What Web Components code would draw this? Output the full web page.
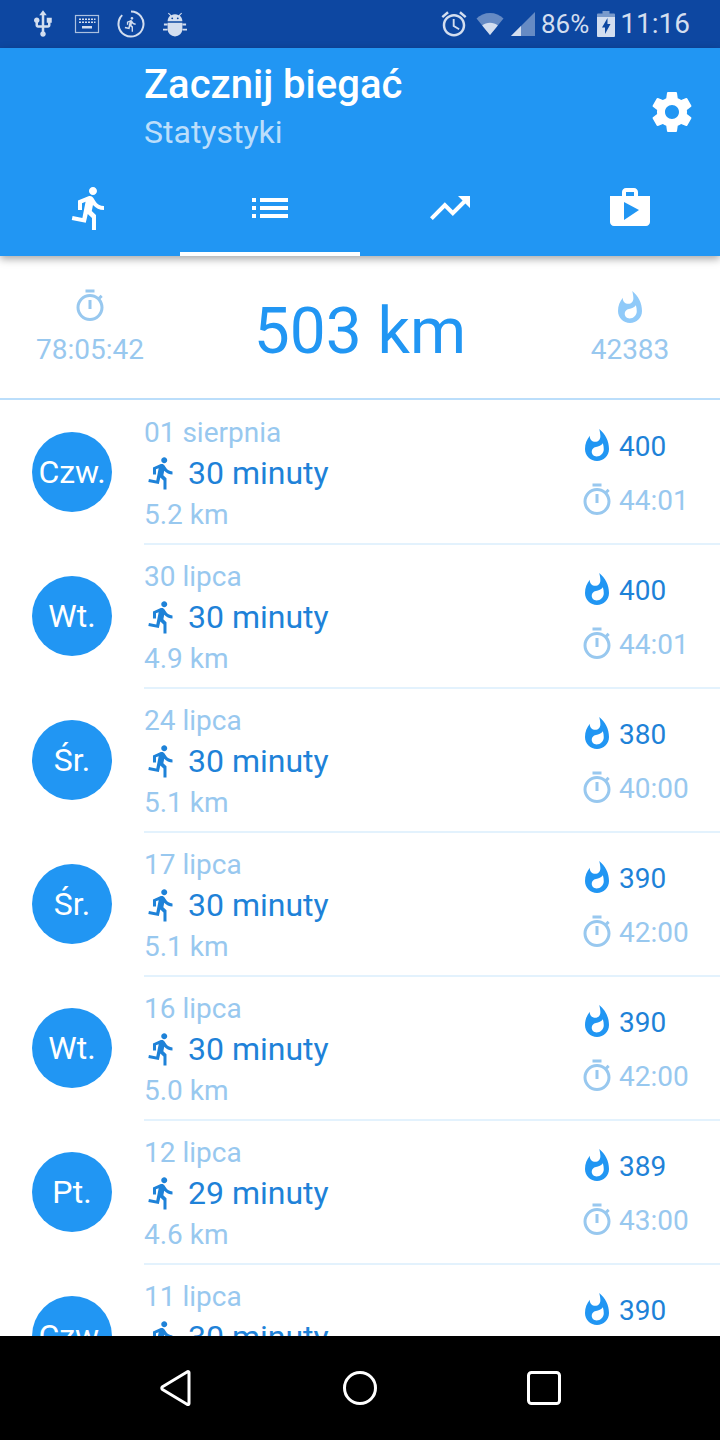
<!DOCTYPE html>
<html lang="pl">
<head>
<meta charset="utf-8">
<title>Zacznij biegać</title>
<style>
  html, body { margin: 0; padding: 0; background: #fff; }
  body { font-family: Roboto, "Noto Sans", sans-serif; }
  run-screen { height: 1440px; }
</style>
</head>
<body>
<run-screen>
  <status-bar slot="status"></status-bar>
  <app-bar slot="top" title="Zacznij biegać" subtitle="Statystyki">
    <app-tab icon="run"></app-tab>
    <app-tab icon="list" selected></app-tab>
    <app-tab icon="trend"></app-tab>
    <app-tab icon="shop"></app-tab>
  </app-bar>
  <run-summary slot="top" time="78:05:42" distance="503 km" calories="42383"></run-summary>
  <run-row day="Czw." date="01 sierpnia" duration="30 minuty" distance="5.2 km" calories="400" time="44:01"></run-row>
  <run-row day="Wt." date="30 lipca" duration="30 minuty" distance="4.9 km" calories="400" time="44:01"></run-row>
  <run-row day="Śr." date="24 lipca" duration="30 minuty" distance="5.1 km" calories="380" time="40:00"></run-row>
  <run-row day="Śr." date="17 lipca" duration="30 minuty" distance="5.1 km" calories="390" time="42:00"></run-row>
  <run-row day="Wt." date="16 lipca" duration="30 minuty" distance="5.0 km" calories="390" time="42:00"></run-row>
  <run-row day="Pt." date="12 lipca" duration="29 minuty" distance="4.6 km" calories="389" time="43:00"></run-row>
  <run-row day="Czw." date="11 lipca" duration="30 minuty" distance="4.8 km" calories="390" time="42:00"></run-row>
  <nav-bar slot="nav"></nav-bar>
</run-screen>

<script>
const icons = {
	run: "M13.49 5.48c1.1 0 2-.9 2-2s-.9-2-2-2-2 .9-2 2 .9 2 2 2zm-3.6 13.9l1-4.4 2.1 2v6h2v-7.5l-2.1-2 .6-3c1.3 1.5 3.3 2.5 5.5 2.5v-2c-1.9 0-3.5-1-4.3-2.4l-1-1.6c-.4-.6-1-1-1.7-1-.3 0-.5.1-.8.1l-5.2 2.2v4.7h2v-3.4l1.8-.7-1.6 8.1-4.9-1-.4 2 7 1.4z",
	list: "M3 13h2v-2H3v2zm0 4h2v-2H3v2zm0-8h2V7H3v2zm4 4h14v-2H7v2zm0 4h14v-2H7v2zM7 7v2h14V7H7z",
	trend: "M16 6l2.29 2.29-4.88 4.88-4-4L2 16.59 3.41 18l6-6 4 4 6.3-6.29L22 12V6z",
	shop: "M16 6V4c0-1.11-.89-2-2-2h-4c-1.11 0-2 .89-2 2v2H2v13c0 1.11.89 2 2 2h16c1.11 0 2-.89 2-2V6h-6zm-6-2h4v2h-4V4zM9 18V9l7.5 4L9 18z",
	settings: "M19.43 12.98c.04-.32.07-.64.07-.98s-.03-.66-.07-.98l2.11-1.65c.19-.15.24-.42.12-.64l-2-3.46c-.12-.22-.39-.3-.61-.22l-2.49 1c-.52-.4-1.08-.73-1.69-.98l-.38-2.65C14.46 2.18 14.25 2 14 2h-4c-.25 0-.46.18-.49.42l-.38 2.65c-.61.25-1.17.59-1.69.98l-2.49-1c-.23-.09-.49 0-.61.22l-2 3.46c-.13.22-.07.49.12.64l2.11 1.65c-.04.32-.07.65-.07.98s.03.66.07.98l-2.11 1.65c-.19.15-.24.42-.12.64l2 3.46c.12.22.39.3.61.22l2.49-1c.52.4 1.08.73 1.69.98l.38 2.65c.03.24.24.42.49.42h4c.25 0 .46-.18.49-.42l.38-2.65c.61-.25 1.17-.59 1.69-.98l2.49 1c.23.09.49 0 .61-.22l2-3.46c.12-.22.07-.49-.12-.64l-2.11-1.65zM12 15.5c-1.93 0-3.5-1.57-3.5-3.5s1.57-3.5 3.5-3.5 3.5 1.57 3.5 3.5-1.57 3.5-3.5 3.5z",
	timer: "M15 1H9v2h6V1zm-4 13h2V8h-2v6zm8.03-6.61l1.42-1.42c-.43-.51-.9-.99-1.41-1.41l-1.42 1.42C16.07 4.74 14.12 4 12 4c-4.97 0-9 4.03-9 9s4.02 9 9 9 9-4.03 9-9c0-2.12-.74-4.07-1.97-5.61zM12 20c-3.87 0-7-3.13-7-7s3.13-7 7-7 7 3.13 7 7-3.13 7-7 7z",
	flame: "M13.5.67s.74 2.65.74 4.8c0 2.06-1.35 3.73-3.41 3.73-2.07 0-3.63-1.67-3.63-3.73l.03-.36C5.21 7.51 4 10.62 4 14c0 4.42 3.58 8 8 8s8-3.58 8-8C20 8.61 17.41 3.8 13.5.67zM11.71 19c-1.78 0-3.22-1.4-3.22-3.14 0-1.62 1.05-2.76 2.81-3.12 1.77-.36 3.6-1.21 4.62-2.58.39 1.29.59 2.65.59 4.04 0 2.65-2.15 4.8-4.8 4.8z",
	usb: "M15 7v4h1v2h-3V5h2l-3-4-3 4h2v8H8v-2.07c.7-.37 1.2-1.08 1.2-1.93 0-1.21-.99-2.2-2.2-2.2-1.21 0-2.2.99-2.2 2.2 0 .85.5 1.56 1.2 1.93V13c0 1.11.89 2 2 2h3v3.05c-.71.37-1.2 1.1-1.2 1.95 0 1.22.99 2.2 2.2 2.2 1.21 0 2.2-.98 2.2-2.2 0-.85-.49-1.58-1.2-1.95V15h3c1.11 0 2-.89 2-2v-2h1V7h-4z",
	alarm: "M22 5.72l-4.6-3.86-1.29 1.53 4.6 3.86L22 5.72zM7.88 3.39L6.6 1.86 2 5.71l1.29 1.53 4.59-3.85zM12.5 8H11v6l4.75 2.85.75-1.23-4-2.37V8zM12 4c-4.97 0-9 4.03-9 9s4.03 9 9 9c4.97 0 9-4.03 9-9s-4.03-9-9-9zm0 16c-3.87 0-7-3.13-7-7s3.13-7 7-7 7 3.13 7 7-3.13 7-7 7z",
};

class MdIcon extends HTMLElement {
	connectedCallback() {
		const size = this.getAttribute("size") || 48;
		const root = this.shadowRoot || this.attachShadow({ mode: "open" });
		root.innerHTML = `
			<style>
				:host { display: block; width: ${size}px; height: ${size}px; flex: none; }
				svg { display: block; width: 100%; height: 100%; fill: currentColor; }
			</style>
			<svg viewBox="0 0 24 24"><path d="${icons[this.getAttribute("name")]}"/></svg>
		`;
	}
}
customElements.define("md-icon", MdIcon);

const screenTemplate = document.createElement("template");
screenTemplate.innerHTML = `
	<style>
		:host { display: flex; flex-direction: column; width: 720px; overflow: hidden; background: #fff; }
		.list { flex: 1; min-height: 0; overflow: hidden; }
	</style>
	<slot name="status"></slot>
	<slot name="top"></slot>
	<div class="list"><slot></slot></div>
	<slot name="nav"></slot>
`;
customElements.define("run-screen", class extends HTMLElement {
	constructor() {
		super();
		this.attachShadow({ mode: "open" }).append(screenTemplate.content.cloneNode(true));
	}
});

const statusTemplate = document.createElement("template");
statusTemplate.innerHTML = `
	<style>
		:host { display: flex; align-items: center; height: 48px; flex: none; background: #0d47a1; color: #d3deef; font-size: 28px; box-sizing: border-box; padding: 0 30px 0 28px; }
		.group { display: flex; align-items: center; }
		.right { margin-left: auto; }
		svg { display: block; flex: none; fill: currentColor; }
		span { line-height: 48px; }
	</style>
	<div class="group">
		<md-icon name="usb" size="30"></md-icon>
		<svg style="margin-left:16px" width="26" height="20" viewBox="0 0 26 20">
			<rect x="1.500" y="1.500" width="23" height="17" fill="none" stroke="currentColor" stroke-width="1.200" opacity=".8"/>
			<path d="M5 4.500h2v1.500H5zM8 4.500h2v1.500H8zM11 4.500h2v1.500h-2zM14 4.500h2v1.500h-2zM17 4.500h2v1.500h-2zM20 4.500h1.500v1.500H20zM5 7.500h2V9H5zM8 7.500h2V9H8zM11 7.500h2V9h-2zM14 7.500h2V9h-2zM17 7.500h2V9h-2zM20 7.500h1.500V9H20zM8 12h10v2.500H8z"/>
		</svg>
		<svg style="margin-left:17px" width="28" height="28" viewBox="0 0 28 28">
			<path d="M14 1.500A12.500 12.500 0 1 1 5.200 5.100M3.300 7.500A12.500 12.500 0 0 0 1.500 14" fill="none" stroke="currentColor" stroke-width="2"/>
			<g transform="translate(5.800 6) scale(.68)"><path d="${icons.run}"/></g>
		</svg>
		<svg style="margin-left:18px" width="24" height="27" viewBox="0 0 26 28">
			<path d="M6.200 1.200 5.400 2l2.500 2.500C5.900 6 5 8 5 10.500h16C21 8 20.100 6 18.100 4.500L20.600 2l-.8-.8-2.800 2.700a8.500 8.500 0 0 0-8 0zM10 6.300a1 1 0 1 1 0 2 1 1 0 0 1 0-2zm6 0a1 1 0 1 1 0 2 1 1 0 0 1 0-2zM5 12h16v7a8 8 0 0 1-16 0z"/>
			<path d="M1 13h4v2H1zM21 13h4v2h-4zM0 18.500h5v2H0zM21 18.500h5v2h-5z"/>
		</svg>
	</div>
	<div class="group right">
		<md-icon name="alarm" size="30"></md-icon>
		<svg style="margin-left:7px" width="28" height="24" viewBox="0 0 28 24">
			<path d="M14 23 .5 6.500C4 3 8.800 1 14 1s10 2 13.500 5.500z" opacity=".45"/>
			<path d="M14 23 6.200 13.500C8.300 11.800 11 10.800 14 10.800s5.700 1 7.800 2.700z"/>
		</svg>
		<svg style="margin-left:6px" width="26" height="26" viewBox="0 0 26 26">
			<path d="M1 25 25 1v24z" opacity=".45"/>
			<path d="M1 25 11 15v10z"/>
		</svg>
		<span style="margin-left:5px;font-size:26px">86%</span>
		<svg style="margin-left:8px" width="18" height="26" viewBox="0 0 18 26">
			<path d="M5.500 0h7v2.500H17a1 1 0 0 1 1 1V6H0V3.500a1 1 0 0 1 1-1h4.500z" opacity=".55"/>
			<path fill-rule="evenodd" d="M0 6h18v19a1 1 0 0 1-1 1H1a1 1 0 0 1-1-1zM10.500 7 5 16.500h3V23l5.500-10h-3z"/>
		</svg>
		<span style="margin-left:5px">11:16</span>
	</div>
`;
customElements.define("status-bar", class extends HTMLElement {
	constructor() {
		super();
		this.attachShadow({ mode: "open" }).append(statusTemplate.content.cloneNode(true));
	}
});

const appBarTemplate = document.createElement("template");
appBarTemplate.innerHTML = `
	<style>
		:host { display: block; position: relative; z-index: 2; background: #2196f3; color: #fff; box-shadow: 0 3px 8px rgba(0,0,0,.35); }
		.head { display: flex; align-items: center; height: 128px; padding: 0 24px 0 144px; }
		.titles { flex: 1; padding-bottom: 8px; }
		.title { font-size: 40px; font-weight: 500; line-height: 48px; }
		.subtitle { font-size: 32px; line-height: 46px; color: #bbdefb; }
		.tabs { display: grid; grid-template-columns: repeat(4, 1fr); }
	</style>
	<div class="head">
		<div class="titles">
			<div class="title"></div>
			<div class="subtitle"></div>
		</div>
		<md-icon name="settings"></md-icon>
	</div>
	<div class="tabs"><slot></slot></div>
`;
customElements.define("app-bar", class extends HTMLElement {
	constructor() {
		super();
		const root = this.attachShadow({ mode: "open" });
		root.append(appBarTemplate.content.cloneNode(true));
		root.querySelector(".title").textContent = this.getAttribute("title");
		root.querySelector(".subtitle").textContent = this.getAttribute("subtitle");
	}
});

customElements.define("app-tab", class extends HTMLElement {
	connectedCallback() {
		const root = this.attachShadow({ mode: "open" });
		root.innerHTML = `
			<style>
				:host { display: flex; justify-content: center; height: 80px; box-sizing: border-box; padding-top: 8px; border-bottom: 4px solid transparent; }
				:host([selected]) { border-bottom-color: #fff; }
			</style>
			<md-icon name="${this.getAttribute("icon")}"></md-icon>
		`;
	}
});

const summaryTemplate = document.createElement("template");
summaryTemplate.innerHTML = `
	<style>
		:host { display: grid; grid-template-columns: 180px 1fr 180px; height: 144px; box-sizing: border-box; border-bottom: 2px solid #bbdefb; color: #98c8ef; }
		.side { display: flex; flex-direction: column; align-items: center; padding-top: 32px; font-size: 28px; line-height: 44px; }
		.side md-icon { margin-bottom: 4px; }
		.side md-icon[name="flame"] { margin: 2px 0; color: #90caf9; }
		.main { text-align: center; font-size: 64px; line-height: 152px; color: #2196f3; }
	</style>
	<div class="side"><md-icon name="timer" size="36"></md-icon><span class="time"></span></div>
	<div class="main"></div>
	<div class="side"><md-icon name="flame" size="36"></md-icon><span class="calories"></span></div>
`;
customElements.define("run-summary", class extends HTMLElement {
	constructor() {
		super();
		const root = this.attachShadow({ mode: "open" });
		root.append(summaryTemplate.content.cloneNode(true));
		root.querySelector(".time").textContent = this.getAttribute("time");
		root.querySelector(".main").textContent = this.getAttribute("distance");
		root.querySelector(".calories").textContent = this.getAttribute("calories");
	}
});

const rowTemplate = document.createElement("template");
rowTemplate.innerHTML = `
	<style>
		:host { display: flex; align-items: flex-start; height: 144px; color: #98c8ef; font-size: 28px; }
		.badge-col { width: 144px; height: 144px; flex: none; display: flex; padding-left: 32px; box-sizing: border-box; align-items: center; }
		.badge { width: 80px; height: 80px; border-radius: 50%; background: #2196f3; color: #fff; font-size: 32px; display: flex; align-items: center; justify-content: center; }
		.body { flex: 1; height: 145px; display: flex; border-bottom: 2px solid #e3f2fd; box-sizing: border-box; }
		.info { flex: 1; display: flex; flex-direction: column; justify-content: center; padding-top: 3px; box-sizing: border-box; }
		.info div { line-height: 41px; }
		.duration { display: flex; align-items: center; gap: 8px; font-size: 32px; color: #1e82d8; }
		.stats { width: 137px; flex: none; display: flex; flex-direction: column; justify-content: center; gap: 18px; padding-top: 3px; box-sizing: border-box; }
		.stat { display: flex; align-items: center; gap: 4px; height: 36px; margin-left: -4px; }
		.stat.hot { color: #1e82d8; }
		.stat.hot md-icon { color: #2196f3; }
	</style>
	<div class="badge-col"><div class="badge"></div></div>
	<div class="body">
		<div class="info">
			<div class="date"></div>
			<div class="duration"><md-icon name="run" size="36"></md-icon><span></span></div>
			<div class="distance"></div>
		</div>
		<div class="stats">
			<div class="stat hot"><md-icon name="flame" size="36"></md-icon><span class="calories"></span></div>
			<div class="stat"><md-icon name="timer" size="36"></md-icon><span class="time"></span></div>
		</div>
	</div>
`;
customElements.define("run-row", class extends HTMLElement {
	constructor() {
		super();
		const root = this.attachShadow({ mode: "open" });
		root.append(rowTemplate.content.cloneNode(true));
		root.querySelector(".badge").textContent = this.getAttribute("day");
		root.querySelector(".date").textContent = this.getAttribute("date");
		root.querySelector(".duration span").textContent = this.getAttribute("duration");
		root.querySelector(".distance").textContent = this.getAttribute("distance");
		root.querySelector(".calories").textContent = this.getAttribute("calories");
		root.querySelector(".time").textContent = this.getAttribute("time");
	}
});

const navTemplate = document.createElement("template");
navTemplate.innerHTML = `
	<style>
		:host { display: grid; grid-template-columns: 176px 192px 176px; justify-content: center; justify-items: center; align-items: center; height: 104px; flex: none; background: #000; position: relative; z-index: 2; }
		svg { display: block; fill: none; stroke: #fff; stroke-width: 3; stroke-linejoin: round; }
	</style>
	<svg width="36" height="36" viewBox="0 0 36 36"><path d="M31 2.500v31c0 1-1 1.500-2 .8L4.500 19.500c-1-.8-1-2 0-2.800L29 2c1-.8 2-.4 2 .5z"/></svg>
	<svg width="36" height="36" viewBox="0 0 36 36"><circle cx="18" cy="18" r="15.500"/></svg>
	<svg width="36" height="36" viewBox="0 0 36 36"><rect x="2.500" y="2.500" width="31" height="31" rx="3"/></svg>
`;
customElements.define("nav-bar", class extends HTMLElement {
	constructor() {
		super();
		this.attachShadow({ mode: "open" }).append(navTemplate.content.cloneNode(true));
	}
});
</script>
</body>
</html>
